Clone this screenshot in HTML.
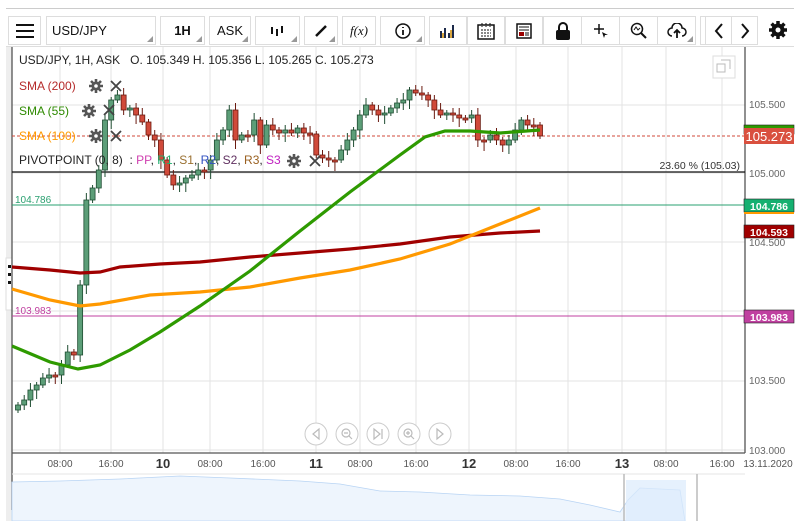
<!DOCTYPE html>
<html><head><meta charset="utf-8">
<style>
*{margin:0;padding:0;box-sizing:border-box}
body{width:802px;height:521px;overflow:hidden;background:#fff;font-family:"Liberation Sans",sans-serif;position:relative}
.tb{position:absolute;top:16px;height:29px;border:1px solid #ddd;background:#fff;display:flex;align-items:center;justify-content:center;font-size:13px;color:#111}
.tri:after{content:"";position:absolute;right:2px;bottom:2px;border-left:6px solid transparent;border-bottom:6px solid #999}
.lg{position:absolute;font-size:12px;left:19px}
</style></head><body>
<div style="position:absolute;left:6px;right:8px;top:8px;height:1px;background:#ccc"></div>
<div class="tb" style="left:8px;width:33px"><svg width="18" height="14"><path d="M0 1H18M0 7H18M0 13H18" stroke="#111" stroke-width="2"/></svg></div>
<div class="tb tri" style="left:46px;width:110px;justify-content:flex-start;padding-left:5px">USD/JPY</div>
<div class="tb tri" style="left:160px;width:45px;font-weight:bold">1H</div>
<div class="tb tri" style="left:209px;width:42px">ASK</div>
<div class="tb tri" style="left:255px;width:45px"><svg width="16" height="12"><path d="M2 2V9M7 4V11M12 1V8" stroke="#111" stroke-width="2"/></svg></div>
<div class="tb tri" style="left:304px;width:34px"><svg width="14" height="14"><path d="M2 12L12 2" stroke="#111" stroke-width="2.5"/></svg></div>
<div class="tb" style="left:342px;width:34px;font-family:'Liberation Serif',serif;font-style:italic">f(x)</div>
<div class="tb tri" style="left:380px;width:45px"><svg width="16" height="16"><circle cx="8" cy="8" r="7" fill="none" stroke="#111" stroke-width="1.5"/><path d="M8 7V12M8 4V5" stroke="#111" stroke-width="1.8"/></svg></div>
<div class="tb" style="left:429px;width:38px"><svg width="18" height="14"><path d="M2 14V7M6 14V4M10 14V9M14 14V1" stroke="#1c2a4a" stroke-width="2"/><path d="M4 14V9M12 14V6" stroke="#c80" stroke-width="1.5"/></svg></div>
<div class="tb" style="left:467px;width:38px"><svg width="18" height="18"><rect x="1" y="3" width="16" height="14" fill="none" stroke="#111" stroke-width="1.5"/><path d="M5 1V5M9 1V5M13 1V5M4 8H14M4 11H14M4 14H14" stroke="#111" stroke-width="1" stroke-dasharray="2 1"/></svg></div>
<div class="tb" style="left:505px;width:38px"><svg width="16" height="16"><rect x="1" y="1" width="14" height="14" fill="none" stroke="#111" stroke-width="1.5"/><path d="M3 4H13M3 7H13" stroke="#111"/><rect x="3" y="9" width="5" height="4" fill="#900"/><path d="M9 10H13M9 12H13" stroke="#111"/></svg></div>
<div class="tb" style="left:543px;width:39px"><svg width="16" height="18"><path d="M4 8V5a4 4 0 0 1 8 0V8" fill="none" stroke="#111" stroke-width="2"/><rect x="1" y="8" width="14" height="10" rx="2" fill="#111"/></svg></div>
<div class="tb" style="left:581px;width:39px"><svg width="16" height="16"><path d="M6 1V11M1 6H11" stroke="#111" stroke-width="1.5"/><path d="M9 9L15 12L12 12L11 15Z" fill="#111"/></svg></div>
<div class="tb" style="left:619px;width:39px"><svg width="18" height="18"><circle cx="7" cy="7" r="5.5" fill="none" stroke="#111" stroke-width="1.5"/><path d="M11 11L16 16" stroke="#111" stroke-width="2"/><path d="M4 8L6 5L8 8L10 6" fill="none" stroke="#111"/></svg></div>
<div class="tb tri" style="left:657px;width:39px"><svg width="20" height="16"><path d="M5 13a4 4 0 0 1 0-8a5 5 0 0 1 10 0a4 4 0 0 1 0 8" fill="none" stroke="#111" stroke-width="1.5"/><path d="M10 15V7M7 10L10 7L13 10" fill="none" stroke="#111" stroke-width="1.8"/></svg></div>
<div class="tb" style="left:700px;width:5px;border-right:none"></div>
<div class="tb" style="left:705px;width:27px"><svg width="10" height="16"><path d="M8 1L2 8L8 15" fill="none" stroke="#111" stroke-width="2"/></svg></div>
<div class="tb" style="left:731px;width:27px"><svg width="10" height="16"><path d="M2 1L8 8L2 15" fill="none" stroke="#111" stroke-width="2"/></svg></div>
<div style="position:absolute;left:768px;top:20px"><svg width="20" height="20" viewBox="0 0 20 20"><g fill="#111"><circle cx="10" cy="10" r="6.5"/><g stroke="#111" stroke-width="3.5"><path d="M10 1V19M1 10H19M3.6 3.6L16.4 16.4M16.4 3.6L3.6 16.4"/></g></g><circle cx="10" cy="10" r="2.5" fill="#fff"/></svg></div>
<div style="position:absolute;left:6px;right:8px;top:46px;height:1px;background:#ddd"></div>

<svg id="ch" width="802" height="521" style="position:absolute;left:0;top:0">
<rect x="6" y="47" width="6" height="474" fill="#eee"/>
<rect x="6" y="258" width="6" height="52" fill="#fff" stroke="#ddd"/>
<path d="M8 265h3v3h-3zM8 273h3v3h-3zM8 281h3v3h-3z" fill="#111"/>
<g stroke="#e3e3e3" stroke-width="1" id="grid"></g>
<path d="M745 47V453M12 453H745M12 47V510" stroke="#555" stroke-width="1.3" fill="none"/>
<path d="M12 172H745" stroke="#111" stroke-width="1.2"/>
<path d="M12 205H745" stroke="#2aa070" stroke-width="1"/>
<path d="M12 316H745" stroke="#c040a0" stroke-width="1"/>
<path d="M12 136H745" stroke="#d04a3a" stroke-width="1" stroke-dasharray="3 2"/>
<g id="cand"></g>
<polyline fill="none" stroke="#a00000" stroke-width="3.2" points="12,267 50,270 80,273 100,272 120,267 160,264 200,262 250,257 300,253 350,249 400,244 450,237 500,233 540,231"/>
<polyline fill="none" stroke="#ff9900" stroke-width="3.2" points="12,289 50,300 80,306 100,304 150,295 200,292 250,287 300,278 350,270 400,259 450,244 500,224 540,208"/>
<polyline fill="none" stroke="#2e9a00" stroke-width="3.2" points="12,346 50,362 78,369 100,365 130,350 160,332 200,306 250,271 300,231 350,192 400,155 425,137 445,131 470,131 500,133 540,130"/>
<text x="15" y="203" font-size="10" fill="#2aa070">104.786</text>
<text x="15" y="314" font-size="10" fill="#c040a0">103.983</text>
<text x="740" y="169" font-size="10.5" fill="#333" text-anchor="end">23.60 % (105.03)</text>
<g font-size="10" fill="#666"><text x="749" y="108">105.500</text><text x="749" y="177">105.000</text><text x="749" y="246">104.500</text><text x="749" y="384">103.500</text><text x="749" y="454">103.000</text></g>
<rect x="744" y="125" width="50" height="9" fill="#2e9a00" stroke="#222" stroke-width="0.6"/>
<rect x="744" y="128" width="50" height="16" fill="#d9503f"/>
<text x="769" y="141" font-size="13" fill="#fff" text-anchor="middle">105.273</text>
<rect x="744" y="199" width="50" height="13" fill="#15b070" stroke="#222" stroke-width="0.6"/>
<rect x="744" y="212" width="50" height="2" fill="#ff9900"/>
<text x="769" y="210" font-size="10.5" font-weight="bold" fill="#fff" text-anchor="middle">104.786</text>
<rect x="744" y="225" width="50" height="13" fill="#a00000" stroke="#222" stroke-width="0.6"/>
<text x="769" y="236" font-size="10.5" font-weight="bold" fill="#fff" text-anchor="middle">104.593</text>
<rect x="744" y="310" width="50" height="13" fill="#c040a0" stroke="#222" stroke-width="0.6"/>
<text x="769" y="321" font-size="10.5" font-weight="bold" fill="#fff" text-anchor="middle">103.983</text>
<rect x="713" y="56" width="22" height="22" fill="#fff" stroke="#ddd"/>
<path d="M717 64h8v8h-8zM721 60h9v9" fill="none" stroke="#bbb"/>
<g font-size="10" fill="#555" text-anchor="middle">
<text x="60" y="467">08:00</text><text x="111" y="467">16:00</text><text x="163" y="468" font-size="13" font-weight="bold" fill="#333">10</text><text x="210" y="467">08:00</text><text x="263" y="467">16:00</text><text x="316" y="468" font-size="13" font-weight="bold" fill="#333">11</text><text x="360" y="467">08:00</text><text x="416" y="467">16:00</text><text x="469" y="468" font-size="13" font-weight="bold" fill="#333">12</text><text x="516" y="467">08:00</text><text x="568" y="467">16:00</text><text x="622" y="468" font-size="13" font-weight="bold" fill="#333">13</text><text x="666" y="467">08:00</text><text x="722" y="467">16:00</text><text x="768" y="467">13.11.2020</text></g>
<g fill="#fff" stroke="#ccc"><circle cx="316" cy="434" r="11"/><circle cx="347" cy="434" r="11"/><circle cx="378" cy="434" r="11"/><circle cx="409" cy="434" r="11"/><circle cx="440" cy="434" r="11"/></g>
<g fill="none" stroke="#bbb" stroke-width="1.2"><path d="M319 429L313 434L319 439Z"/><circle cx="346" cy="433" r="4"/><path d="M349 436L352 439M344 433H348"/><path d="M374 429L380 434L374 439ZM382 429V439"/><circle cx="408" cy="433" r="4"/><path d="M411 436L414 439M406 433H410M408 431V435"/><path d="M437 429L443 434L437 439Z"/></g>
<path d="M12 474H745" stroke="#e6e6e6"/>
<path d="M12 482 L60 481 L120 479 L180 476 L230 478 L300 481 L340 484 L380 491 L420 492 L470 495 L520 496 L560 499 L590 505 L620 512 L628 500 L640 488 L680 490 L685 521 L12 521Z" fill="#eef5fd" stroke="#b8d4f4" stroke-width="0.8"/>
<rect x="626" y="480" width="60" height="41" fill="#dcebfc" opacity="0.7"/>
<path d="M624 474V521M697 474V521" stroke="#bbb" stroke-width="1.5"/>
</svg>

<div class="lg" style="top:53px;color:#222;left:19px">USD/JPY, 1H, ASK &nbsp; O. 105.349 H. 105.356 L. 105.265 C. 105.273</div>
<div class="lg" style="top:79px;color:#b52a2a">SMA (200)</div>
<div class="lg" style="top:104px;color:#2e8a00">SMA (55)</div>
<div class="lg" style="top:129px;color:#ff9900">SMA (100)</div>
<div class="lg" style="top:153px;color:#222">PIVOTPOINT (0, 8) &nbsp;: <span style="color:#d040b0">PP</span>, <span style="color:#20b070">R1</span>, <span style="color:#9a7030">S1</span>, <span style="color:#3050c0">R2</span>, <span style="color:#603060">S2</span>, <span style="color:#9a6020">R3</span>, <span style="color:#c020c0">S3</span></div>
<svg width="802" height="200" style="position:absolute;left:0;top:0" id="ic"></svg>
<script>
var ic=document.getElementById('ic'),s='';
function gear(x,y){return '<g transform="translate('+x+','+y+')" fill="#555"><circle r="4.5"/><path d="M0-7V7M-7 0H7M-5-5L5 5M5-5L-5 5" stroke="#555" stroke-width="2.6"/><circle r="1.8" fill="#fff"/></g>';}
function cx(x,y){return '<path d="M'+(x-5)+' '+(y-5)+'L'+(x+5)+' '+(y+5)+'M'+(x+5)+' '+(y-5)+'L'+(x-5)+' '+(y+5)+'" stroke="#444" stroke-width="1.8"/>';}
[[96,86,116,86],[89,111,109,110],[96,136,116,136],[294,161,315,161]].forEach(function(a){s+=gear(a[0],a[1])+cx(a[2],a[3]);});
ic.innerHTML=s;
var g='';[60,111,163,210,263,316,360,416,469,516,568,622,666,722].forEach(function(x){g+='<path d="M'+x+' 47V453"/>';});
[105,173,242,311,381,450].forEach(function(y){g+='<path d="M12 '+y+'H745"/>';});
document.getElementById('grid').innerHTML=g;
var c=[405,400,390,385,378,375,375,365,352,355,285,200,188,170,120,100,95,110,108,115,122,135,140,160,175,185,183,178,175,170,170,160,140,130,110,140,135,135,120,145,125,130,133,130,133,128,133,134,155,158,160,160,150,140,130,115,105,110,115,113,108,103,100,90,93,95,100,110,115,113,115,118,118,115,140,140,135,140,145,140,130,120,125,125,136];
var h='',prev=410,sp=(540-18)/(c.length-1);
for(var i=0;i<c.length;i++){var x=18+i*sp,o=prev,cl=c[i],up=cl<o,t=Math.min(o,cl),b=Math.max(o,cl);if(b-t<2)b=t+2;
var wt=t-3-(i%3)*2,wb=b+3+(i%4)*2;
h+='<path d="M'+x+' '+wt+'V'+wb+'" stroke="'+(up?'#1f4d32':'#6a1a10')+'" stroke-width="1"/>';
h+='<rect x="'+(x-2.5)+'" y="'+t+'" width="5" height="'+(b-t)+'" fill="'+(up?'#5c9e78':'#d04a3a')+'" stroke="'+(up?'#1f4d32':'#6a1a10')+'" stroke-width="0.8"/>';
prev=cl;}
document.getElementById('cand').innerHTML=h;
</script>
</body></html>
